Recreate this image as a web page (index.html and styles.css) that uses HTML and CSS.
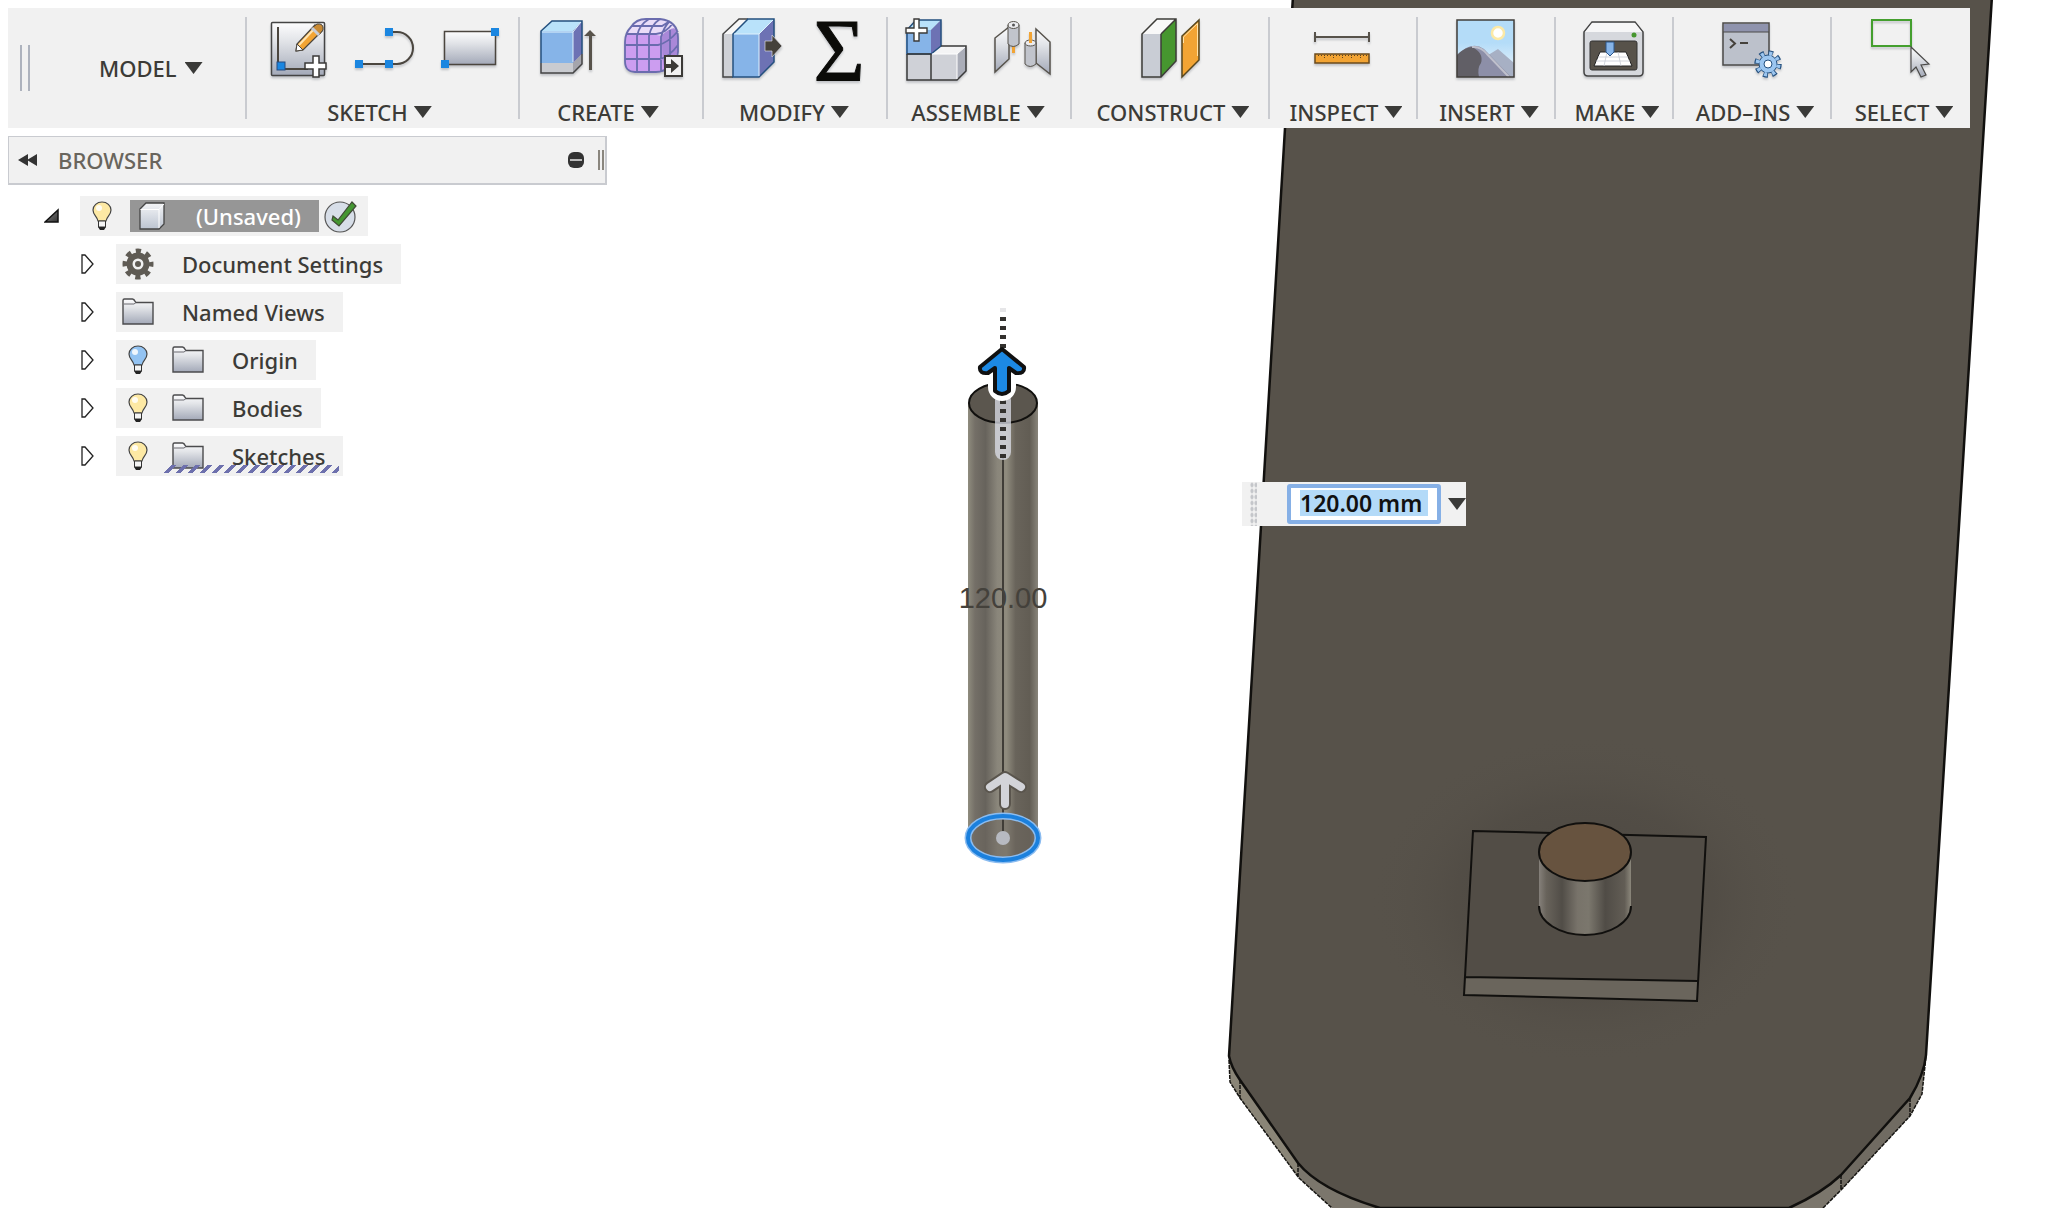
FILE: index.html
```html
<!DOCTYPE html>
<html lang="en">
<head>
<meta charset="utf-8">
<meta name="viewport" content="width=device-width, initial-scale=1">
<title>Model workspace</title>
<link rel="stylesheet" href="styles.css">
</head>
<body>
<svg class="defs" width="0" height="0" aria-hidden="true">
  <defs>
    <linearGradient id="steel" x1="0" y1="0" x2="0" y2="1"><stop offset="0" stop-color="#fdfdfe"/><stop offset=".35" stop-color="#e2e4e8"/><stop offset="1" stop-color="#a3a9b8"/></linearGradient>
    <linearGradient id="glass" x1="0" y1="0" x2="0" y2="1"><stop offset="0" stop-color="#f4f5f7"/><stop offset="1" stop-color="#bcc4d1"/></linearGradient>
    <linearGradient id="cornerShade" x1="0" y1="0" x2="1" y2="1"><stop offset="0" stop-color="#888"/><stop offset="1" stop-color="#333"/></linearGradient>
    <symbol id="bulb" viewBox="0 0 20 30">
      <path d="M6 20C5 15 1 14 1 9a9 8 0 0 1 18 0c0 5-4 6-5 11z" stroke="#444" stroke-width="1.2"/>
      <circle cx="7" cy="7" r="3" fill="#fff" opacity=".85"/>
      <path d="M6.500 20h7v6h-7z" fill="#f4f4f4" stroke="#333"/><path d="M6 26h8l-2 3H8z" fill="#222"/>
    </symbol>
    <symbol id="folder" viewBox="0 0 32 30">
      <path d="M1 3.500q0-1.500 1.500-1.500h8q1.500 0 3 3l.5 .5h17v21.500H1z" fill="url(#steel)" stroke="#4b4b4d" stroke-width="1.400"/>
      <path d="M2 7h10l2-1.500" fill="none" stroke="#6b6b70"/>
    </symbol>
  </defs>
</svg>

<svg class="scene" viewBox="0 0 2066 1208" preserveAspectRatio="xMidYMin slice" role="img" aria-label="Model canvas">
  <defs>
    <linearGradient id="rod"><stop offset="0" stop-color="#8f8c7e"/><stop offset=".1" stop-color="#746f67"/><stop offset=".25" stop-color="#67635c"/><stop offset=".42" stop-color="#8a867b"/><stop offset=".55" stop-color="#8f8b7d"/><stop offset=".68" stop-color="#69645b"/><stop offset=".88" stop-color="#625d54"/><stop offset="1" stop-color="#88847a"/></linearGradient>
    <linearGradient id="peg"><stop offset="0" stop-color="#85807a"/><stop offset=".08" stop-color="#68635b"/><stop offset=".25" stop-color="#514d47"/><stop offset=".42" stop-color="#78736a"/><stop offset=".54" stop-color="#7b776d"/><stop offset=".72" stop-color="#504c46"/><stop offset=".93" stop-color="#625d55"/><stop offset="1" stop-color="#8b877b"/></linearGradient>
    <radialGradient id="shade"><stop offset="0" stop-color="#4b4640"/><stop offset=".6" stop-color="#504b44" stop-opacity=".7"/><stop offset="1" stop-color="#57524a" stop-opacity="0"/></radialGradient>
  </defs>
  <path d="M1229 1056L1230 1082L1240 1098L1299 1178L1332 1208H1823L1841 1190L1910 1116L1922 1094L1926 1056z" fill="#7b766c"/>
  <path d="M1230 1060L1240 1080L1298 1163V1177L1240 1098L1230 1082z" fill="#8a8577"/>
  <path d="M1841 1175L1910 1098V1116L1841 1190z" fill="#706b62"/>
  <path d="M1229 1060L1230 1082L1240 1098L1299 1178L1332 1208M1823 1208L1841 1190L1910 1116L1922 1094L1926 1056M1240 1080V1098M1298 1163V1177M1841 1175V1190M1910 1098V1116" fill="none" stroke="#161512" stroke-width="1.500" stroke-dasharray="4 1"/>
  <path d="M1293-4L1229 1056Q1231 1067 1240 1080L1298 1163Q1320 1190 1380 1208H1789Q1822 1193 1841 1175L1910 1098Q1924 1075 1926 1055L1992-4z" fill="#57524a" stroke="#11100e" stroke-width="2.500"/>
  <ellipse cx="1585" cy="900" rx="215" ry="165" fill="url(#shade)"/>
  <path d="M1473 831L1706 837L1698 981L1465 977z" fill="#524d46"/>
  <path d="M1465 977L1698 981V1001L1464 995z" fill="#6a655c"/>
  <path d="M1473 831L1706 837L1697 1001L1464 995zM1465 977L1698 981" fill="none" stroke="#11100e" stroke-width="2"/>
  <path d="M1539 852V906A46 29 0 0 0 1631 906V852z" fill="url(#peg)"/>
  <path d="M1539 906A46 29 0 0 0 1631 906" fill="none" stroke="#11100e" stroke-width="2"/>
  <ellipse cx="1585" cy="852" rx="46" ry="29" fill="#67533f" stroke="#11100e" stroke-width="2"/>

  <path d="M968 403V838A35 22 0 0 0 1038 838V403z" fill="url(#rod)"/>
  <ellipse cx="1003" cy="403" rx="34" ry="20" fill="#5b564e" stroke="#11100e" stroke-width="2"/>
  <path d="M1003 455V836" stroke="#403d37" stroke-width="2"/>
  <ellipse cx="1003" cy="838" rx="35" ry="22" fill="#6b665d" fill-opacity=".5" stroke="#8bbcf0" stroke-width="7"/>
  <ellipse cx="1003" cy="838" rx="35" ry="22" fill="none" stroke="#1b80dd" stroke-width="4"/>
  <path d="M1003 820V836" stroke="#403d37" stroke-width="2"/>
  <circle cx="1003" cy="838" r="7" fill="#b7bac1"/>
  <path d="M1005 804V778M990 787L1005 777L1021 787" fill="none" stroke="#5a554d" stroke-width="12" stroke-linecap="round" stroke-linejoin="round"/>
  <path d="M1005 804V778M990 787L1005 777L1021 787" fill="none" stroke="#d3d4d9" stroke-width="8" stroke-linecap="round" stroke-linejoin="round"/>
  <path d="M1003 400V452" stroke="#dcdfea" stroke-opacity=".75" stroke-width="16" stroke-linecap="round"/>
  <path d="M1003 308V320" stroke="#e6e6e8" stroke-width="6" stroke-dasharray="4 5"/>
  <path d="M1003 400V458" stroke="#33312e" stroke-width="6" stroke-dasharray="4 5"/>
  <path d="M1002 387V360M987 370L1002 358L1018 370" fill="none" stroke="#fff" stroke-width="28" stroke-linecap="round" stroke-linejoin="round"/>
  <path d="M1003 317V350" stroke="#33312e" stroke-width="6" stroke-dasharray="4 5"/>
  <path d="M1002 349L1024 367Q1025 374 1016 373L1009 368V391Q1002 397 995 391V368L988 373Q979 374 980 367z" fill="#1c89e4" stroke="#101010" stroke-width="4" stroke-linejoin="round"/>
  <text class="dimension" x="1003" y="608" text-anchor="middle">120.00</text>
</svg>

<header class="toolbar">
  <div class="workspace">
    <span class="grip"></span>
    <button class="menu" type="button">MODEL<i class="caret"></i></button>
  </div>

  <section class="group lead">
    <div class="icons">
      <svg class="icon" viewBox="0 0 60 64"><rect x="3.500" y="4.500" width="53" height="53" rx="1" fill="url(#steel)" stroke="#444" stroke-width="1.500"/><path d="M10 9V51H40" fill="none" stroke="#4b463f" stroke-width="2"/><rect x="9" y="44" width="8" height="8" fill="#1b86e0" stroke="#274b80"/><path d="M28 33L29 26L47 7L54 13L35 32z" fill="#f2a434" stroke="#4b463f" stroke-width="1.300"/><path d="M28 33L29 26L35 32z" fill="#fff" stroke="#4b463f"/><path d="M31 27L48 9" stroke="#ffe4b0" stroke-width="2"/><path d="M44 10L51 17L55 12Q56 5 49 6z" fill="#c98a33" stroke="#4b463f"/><path d="M44 10L51 17" stroke="#c7ccd6" stroke-width="3"/><path d="M45 38h6v7h7v6h-7v8h-6v-8h-8v-6h8z" fill="#fff" stroke="#3b3a38" stroke-width="1.500"/></svg>
      <svg class="icon" viewBox="0 0 60 64"><path d="M7 46H45A16 16 0 0 0 45 14H37" fill="none" stroke="#4b463f" stroke-width="2"/><path d="M3 42h8v8H3zM33 42h8v8h-8zM33 10h8v8h-8z" fill="#1b86e0"/></svg>
      <svg class="icon" viewBox="0 0 60 64"><rect x="8.500" y="13.500" width="51" height="33" fill="url(#steel)" stroke="#4b463f" stroke-width="1.500"/><path d="M5 42h8v8H5zM55 10h8v8h-8z" fill="#1b86e0"/></svg>
    </div>
    <button class="menu" type="button">SKETCH<i class="caret"></i></button>
  </section>

  <section class="group lead">
    <div class="icons">
      <svg class="icon" viewBox="0 0 60 64"><path d="M3 13H35V45H3z" fill="#86b4e8"/><path d="M3 13L14 3H44L35 13z" fill="#b9e2fa"/><path d="M35 13L44 3V36L35 45z" fill="#6d72b4"/><path d="M3 45H35V55H3z" fill="#c9cbd0"/><path d="M35 45L44 36V46L35 55z" fill="#a5a5ac"/><path d="M3 45V13L14 3H44V36" fill="none" stroke="#24507f" stroke-width="1.500"/><path d="M3 45V55H35L44 46V36" fill="none" stroke="#444" stroke-width="1.500"/><path d="M4 14H35L43 4M35 14V44" fill="none" stroke="#dff1fc" stroke-width="1"/><path d="M51 52V18H46L52 12L58 18H54V52z" fill="#58534b"/></svg>
      <svg class="icon" viewBox="0 0 60 64"><path d="M3 24Q3 15 9 9Q14 1 24 1H38Q56 3 56 20V34Q55 43 48 48Q42 54 34 54H13Q3 54 3 43z" fill="#cc9df0"/><path d="M5 17Q12 1 24 1H38Q51 2 54 11L40 18Q20 13 5 17z" fill="#eadcf8"/><path d="M40 17Q50 8 54 11Q56 14 56 34L43 49Q40 50 40 17z" fill="#a988d8"/><path d="M3 24Q3 15 9 9Q14 1 24 1H38Q56 3 56 20V34Q55 43 48 48Q42 54 34 54H13Q3 54 3 43zM3 27H36Q46 25 56 13M3 41H38Q47 39 56 27M5 16H34Q44 15 51 5M10 8H40L48 3M15 54V18Q17 7 27 1M27 54V18Q29 7 38 1M39 53V19Q42 9 47 4M48 47V12" fill="none" stroke="#6a6cae" stroke-width="1.800"/><rect x="43" y="38" width="17" height="20" fill="#f1f1f1" stroke="#3c3a37" stroke-width="2"/><path d="M42 46h7v-5l8 7-8 7v-5h-7z" fill="#3c3a37"/></svg>
    </div>
    <button class="menu" type="button">CREATE<i class="caret"></i></button>
  </section>

  <section class="group">
    <div class="icons">
      <svg class="icon" viewBox="0 0 60 64"><path d="M1 16L17 1H26L11 16z" fill="#f7f7f7"/><path d="M1 16H11V59H1z" fill="#cfd1d6"/><path d="M11 16L26 1H52L37 16z" fill="#b9e2fa"/><path d="M11 16H37V59H11z" fill="#86b4e8"/><path d="M37 16L52 1V44L37 59z" fill="#6d72b4"/><path d="M11 59H1V16L17 1H26" fill="none" stroke="#444" stroke-width="1.500"/><path d="M11 16L26 1H52V44L37 59H11z" fill="none" stroke="#24507f" stroke-width="1.500"/><path d="M12 16H37L51 2M37 16V58" fill="none" stroke="#dff1fc"/><path d="M43 23H50V17L60 28L50 39V33H43z" fill="#45413b" stroke="#d9d9dc" stroke-width=".7"/></svg>
      <svg class="icon" viewBox="0 0 60 64"><text class="sigma" x="33" y="62" text-anchor="middle">Σ</text></svg>
    </div>
    <button class="menu" type="button">MODIFY<i class="caret"></i></button>
  </section>

  <section class="group">
    <div class="icons">
      <svg class="icon" viewBox="0 0 60 64"><path d="M0 12L10 2H35L25 12z" fill="#b9e2fa"/><path d="M0 12H25V36H0z" fill="#86b4e8"/><path d="M25 12L35 2V28L25 36z" fill="#6d72b4"/><path d="M25 36L35 28H60L51 36z" fill="#f4f4f5"/><path d="M0 36H51V62H0z" fill="#cfd1d7"/><path d="M51 36L60 28V53L51 62z" fill="#aaadb8"/><path d="M1 36V12L10 2H35V28L25 36z" fill="none" stroke="#24507f" stroke-width="1.500"/><path d="M1 36V62H51L60 53V28H35M25 36V62M25 36H1" fill="none" stroke="#3a3a3a" stroke-width="1.500"/><path d="M26 36H51L59 29M51 36V61" fill="none" stroke="#fff"/><path d="M8 1h5v9h8v5h-8v8H8v-8H0v-5h8z" fill="#fff" stroke="#3b3a38" stroke-width="1.400"/></svg>
      <svg class="icon" viewBox="0 0 60 64"><path d="M5 20L19 9V41L5 54z" fill="url(#steel)" stroke="#57534c" stroke-width="1.500"/><path d="M22 27h3v8h-3zM39 14h3v12h-3z" fill="#f2a434"/><path d="M18 7V26Q23 31 29 26V7z" fill="#c1c4cc" stroke="#57534c"/><ellipse cx="23.500" cy="7" rx="5.500" ry="3.500" fill="#ececef" stroke="#57534c"/><circle cx="23.500" cy="7" r="1.500" fill="#555"/><path d="M46 11L60 24V56L46 45z" fill="url(#steel)" stroke="#57534c" stroke-width="1.500"/><path d="M35 25V46Q40 51 46 46V25z" fill="#c1c4cc" stroke="#57534c"/><ellipse cx="40.500" cy="25" rx="5.500" ry="3" fill="#ececef" stroke="#57534c"/><path d="M39 14h3v11h-3z" fill="#f2a434"/></svg>
    </div>
    <button class="menu" type="button">ASSEMBLE<i class="caret"></i></button>
  </section>

  <section class="group single">
    <div class="icons">
      <svg class="icon" viewBox="0 0 60 64"><path d="M3 16L18 1H37L22 16z" fill="#f8f8f8"/><path d="M3 16H22V59H3z" fill="#c9cdd5"/><path d="M22 16L37 1V43L22 59z" fill="#46962f"/><path d="M3 59V16L18 1H37V43L22 59zM22 16V59M22 16L37 1" fill="none" stroke="#3d3c38" stroke-width="1.500"/><path d="M43 18L60 2V42L43 59z" fill="#f2a434" stroke="#57471f" stroke-width="1.500"/><path d="M44.500 19V25M44.500 19L58.500 5.500V38" fill="none" stroke="#ffe2a8"/></svg>
    </div>
    <button class="menu" type="button">CONSTRUCT<i class="caret"></i></button>
  </section>

  <section class="group single">
    <div class="icons">
      <svg class="icon" viewBox="0 0 60 64"><path d="M3 14V24M57 14V24M3 19H57" stroke="#57524a" stroke-width="2"/><rect x="3" y="36" width="54" height="9" fill="#f2a434" stroke="#6b4b1d" stroke-width="1.500"/><path d="M6 37.500H55" stroke="#5b4523" stroke-dasharray="1 2"/><path d="M12 39.500H55" stroke="#5b4523" stroke-dasharray="1 8"/></svg>
    </div>
    <button class="menu" type="button">INSPECT<i class="caret"></i></button>
  </section>

  <section class="group single">
    <div class="icons">
      <svg class="icon" viewBox="0 0 60 64"><defs><linearGradient id="sky" x1="0" y1="0" x2="0" y2="1"><stop offset=".4" stop-color="#b4dcf8"/><stop offset="1" stop-color="#f2f8fd"/></linearGradient></defs><path d="M2 2H59V59H2z" fill="url(#sky)"/><circle cx="43" cy="15" r="6" fill="#fff" stroke="#fce9a6" stroke-width="2.500"/><path d="M30 39L43 31L59 45V59H45z" fill="#a7b0c4"/><path d="M2 37Q17 22 29 31L56 59H2z" fill="#8d8fa8"/><path d="M2 37Q10 29 17 29Q29 35 26 45Q22 50 24 59H2z" fill="#615f66"/><path d="M17 29Q26 28 32 36L54 59" fill="none" stroke="#bfc0cc" stroke-width="2"/><rect x="2" y="2" width="57" height="57" fill="none" stroke="#403e3a" stroke-width="1.500"/></svg>
    </div>
    <button class="menu" type="button">INSERT<i class="caret"></i></button>
  </section>

  <section class="group single">
    <div class="icons">
      <svg class="icon" viewBox="0 0 60 64"><path d="M1 14L9 4H52L60 14V54Q60 58 56 58H5Q1 58 1 54z" fill="#d6d8dd" stroke="#444" stroke-width="1.500"/><path d="M2 14L9 5H52L59 14z" fill="#f6f6f7"/><circle cx="51" cy="17" r="2.500" fill="#46962f"/><rect x="7" y="23" width="47" height="29" rx="2" fill="#57524a" stroke="#333"/><path d="M17 34H43L49 48H11z" fill="#fff" stroke="#222"/><path d="M15 39H45M13 43H47M24 34L21 48M35 34L38 48" stroke="#c8ccd4" stroke-width=".8"/><path d="M23 24H31V34L27 38L23 34z" fill="#86b4e8" stroke="#2c568a"/></svg>
    </div>
    <button class="menu" type="button">MAKE<i class="caret"></i></button>
  </section>

  <section class="group single">
    <div class="icons">
      <svg class="icon" viewBox="0 0 60 64"><rect x="2" y="5" width="46" height="42" fill="#bcc1cb" stroke="#4b4a48" stroke-width="1.500"/><path d="M3 6H47V14H3z" fill="#8f93ad"/><path d="M2 14H48" stroke="#4b4a48"/><path d="M9 21L14 25.500L9 30M19 25H27" fill="none" stroke="#45413b" stroke-width="2"/><circle cx="47" cy="46" r="11" fill="none" stroke="#24507f" stroke-width="5.500" stroke-dasharray="4.600 4.040"/><circle cx="47" cy="46" r="9" fill="#9cc6f0" stroke="#24507f"/><circle cx="47" cy="46" r="10.500" fill="none" stroke="#9cc6f0" stroke-width="4" stroke-dasharray="3 5.250" stroke-dashoffset="-.8"/><circle cx="47" cy="46" r="4" fill="#fff" stroke="#24507f"/></svg>
    </div>
    <button class="menu" type="button">ADD–INS<i class="caret"></i></button>
  </section>

  <section class="group single">
    <div class="icons">
      <svg class="icon" viewBox="0 0 60 64"><rect x="2" y="2" width="39" height="26" fill="none" stroke="#449f2e" stroke-width="2"/><path d="M41 29L59 46L51 47L56 57L51 59L46 49L41 54z" fill="url(#steel)" stroke="#4b4a48" stroke-width="1.200"/></svg>
    </div>
    <button class="menu" type="button">SELECT<i class="caret"></i></button>
  </section>
</header>

<aside class="browser">
  <div class="panel-head">
    <button class="collapse" type="button" aria-label="Collapse"><svg width="20" height="12" viewBox="0 0 20 12"><path d="M0 6L10 0V12zM9 6L19 0V12z" fill="#333"/></svg></button>
    <h2>BROWSER</h2>
    <button class="pin" type="button" aria-label="Minimize"><svg width="16" height="16" viewBox="0 0 16 16"><rect width="16" height="16" rx="6" fill="#333"/><path d="M2 8H14" stroke="#bbb" stroke-width="2"/></svg></button>
    <span class="resizer"></span>
  </div>

  <ul class="tree">
    <li class="root">
      <svg class="toggle" viewBox="0 0 16 20"><path d="M1 16L14 4V16z" fill="url(#cornerShade)" stroke="#111" stroke-width="1.500"/></svg>
      <div class="node">
        <svg class="bulb on"><use href="#bulb"/></svg>
        <span class="doc">
          <svg class="cube" viewBox="0 0 28 28"><path d="M2 7L8 1H26V22L21 27H2z" fill="url(#glass)" stroke="#444" stroke-width="1.300"/><path d="M2.500 7.500H21M21 26V7.500L26 2" fill="none" stroke="#fff"/></svg>
          (Unsaved)
        </span>
        <svg class="check" viewBox="0 0 34 34"><circle cx="16" cy="18" r="15" fill="#d7dee8" stroke="#555" stroke-width="1.200"/><path d="M9 17L14 21L28 3L32 7L15 27L8 21z" fill="#449732" stroke="#3f4a35" stroke-width="1.200"/></svg>
      </div>
    </li>
    <li>
      <svg class="toggle" viewBox="0 0 16 20"><path d="M2 1H5L13 10L5 19H2z" fill="#fff" stroke="#222" stroke-width="1.300"/></svg>
      <div class="node">
        <svg class="glyph" viewBox="0 0 32 32"><circle cx="16" cy="16" r="13" fill="none" stroke="#5f5b54" stroke-width="5" stroke-dasharray="5.200 5.010" stroke-dashoffset="2.600"/><circle cx="16" cy="16" r="8.500" fill="none" stroke="#5f5b54" stroke-width="6"/><circle cx="16" cy="16" r="3" fill="#5f5b54"/></svg>
        <span class="name">Document Settings</span>
      </div>
    </li>
    <li>
      <svg class="toggle" viewBox="0 0 16 20"><path d="M2 1H5L13 10L5 19H2z" fill="#fff" stroke="#222" stroke-width="1.300"/></svg>
      <div class="node"><svg class="glyph"><use href="#folder"/></svg><span class="name">Named Views</span></div>
    </li>
    <li>
      <svg class="toggle" viewBox="0 0 16 20"><path d="M2 1H5L13 10L5 19H2z" fill="#fff" stroke="#222" stroke-width="1.300"/></svg>
      <div class="node"><svg class="bulb off"><use href="#bulb"/></svg><svg class="glyph"><use href="#folder"/></svg><span class="name">Origin</span></div>
    </li>
    <li>
      <svg class="toggle" viewBox="0 0 16 20"><path d="M2 1H5L13 10L5 19H2z" fill="#fff" stroke="#222" stroke-width="1.300"/></svg>
      <div class="node"><svg class="bulb on"><use href="#bulb"/></svg><svg class="glyph"><use href="#folder"/></svg><span class="name">Bodies</span></div>
    </li>
    <li>
      <svg class="toggle" viewBox="0 0 16 20"><path d="M2 1H5L13 10L5 19H2z" fill="#fff" stroke="#222" stroke-width="1.300"/></svg>
      <div class="node pending"><svg class="bulb on"><use href="#bulb"/></svg><svg class="glyph"><use href="#folder"/></svg><span class="name">Sketches</span></div>
    </li>
  </ul>
</aside>

<form class="value-box">
  <span class="dots"></span>
  <input type="text" value="120.00 mm" aria-label="Distance">
  <button type="button" aria-label="Distance options"><i class="caret"></i></button>
</form>
</body>
</html>
```
FILE: styles.css
```css
* {
  box-sizing: border-box;
}

body {
  position: relative;
  min-height: 100vh;
  margin: 0;
  padding: 8px;
  overflow-x: hidden;
  background: #fff;
  color: #3c3b37;
  font: 500 22px/26px "Noto Sans", sans-serif;
}

button {
  padding: 0;
  border: 0;
  background: none;
  color: inherit;
  font: inherit;
}

.defs {
  position: absolute;
}

.scene {
  position: absolute;
  inset: 0;
  width: 100%;
  height: 100%;
}

.dimension {
  fill: #44413b;
  font: 400 29px "Liberation Sans", sans-serif;
}

.toolbar {
  position: relative;
  display: grid;
  grid-template-columns: 237fr 273fr 184fr 184fr 184fr 198fr 148fr 138fr 118fr 158fr 140fr;
  height: 120px;
  margin-right: 88px;
  background: #f1f1f1;
}

.workspace {
  display: flex;
  align-items: center;
  gap: 69px;
  margin: 5px 0;
  padding-left: 12px;
}

.grip {
  width: 10px;
  height: 46px;
  border: solid #adb2bd;
  border-width: 0 2px;
}

.group {
  display: flex;
  flex-direction: column;
  align-items: center;
  justify-content: space-between;
  padding: 10px 0 3px;
  background: linear-gradient(#c9cbd0, #c9cbd0) 0 9px / 2px 102px no-repeat;
}

.icons {
  display: flex;
  gap: 24px;
}

.icon {
  width: 60px;
  height: 64px;
  overflow: visible;
  filter: drop-shadow(0 2px 1px rgb(80 85 100 / 30%));
}

.sigma {
  fill: #0b0b08;
  stroke: #0b0b08;
  stroke-width: 1px;
  font: 400 88px "Liberation Serif", serif;
}

.menu {
  display: flex;
  align-items: center;
  gap: 6px;
  white-space: nowrap;
}

.workspace .menu {
  gap: 8px;
}

.lead .menu {
  padding-right: 4px;
}

.single .menu {
  padding-left: 8px;
}

.caret {
  display: block;
  width: 18px;
  height: 12px;
  background: #3a3a38;
  clip-path: polygon(0 0, 100% 0, 50% 100%);
}

.browser {
  position: relative;
  width: 599px;
  margin-top: 8px;
}

.panel-head {
  display: flex;
  align-items: center;
  height: 49px;
  padding: 0 1px 0 9px;
  border: 1px solid #c9cbd0;
  border-width: 1px 2px 2px 1px;
  background: #f1f1f1;
}

.collapse,
.pin {
  display: flex;
}

.panel-head h2 {
  flex: 1;
  margin: 0 0 0 20px;
  color: #69655d;
  font: inherit;
}

.resizer {
  width: 6px;
  height: 20px;
  margin-left: 14px;
  border: solid #8a867e;
  border-width: 0 2px;
}

.tree {
  display: flex;
  flex-direction: column;
  gap: 8px;
  margin: 11px 0 0;
  padding: 0 0 0 72px;
  list-style: none;
}

.tree li {
  display: flex;
  align-items: center;
  gap: 20px;
}

.tree .root {
  margin-left: -36px;
}

.toggle {
  width: 16px;
  height: 20px;
}

.node {
  display: flex;
  align-items: center;
  height: 40px;
  padding: 0 18px 0 6px;
  background: #f1f1f1;
}

.root .node {
  padding: 0 10px;
}

.bulb {
  width: 20px;
  height: 30px;
  margin: 0 24px 0 6px;
}

.root .bulb {
  margin: 0 18px 0 2px;
}

.on {
  fill: #fde9a4;
}

.off {
  fill: #93c3f2;
}

.glyph {
  width: 32px;
  height: 32px;
}

.name {
  margin-left: 28px;
  white-space: nowrap;
}

.doc {
  display: flex;
  align-items: center;
  gap: 30px;
  height: 32px;
  padding: 0 18px 0 8px;
  background: #969696;
  color: #fff;
}

.cube {
  width: 28px;
  height: 28px;
}

.check {
  width: 34px;
  height: 34px;
  margin-left: 5px;
}

.pending {
  position: relative;
}

.pending::after {
  content: "";
  position: absolute;
  right: 4px;
  bottom: 3px;
  left: 48px;
  height: 8px;
  background: linear-gradient(135deg, transparent 39%, #6d70ad 40% 60%, transparent 61%) 0 0 / 12px 8px;
}

.value-box {
  position: absolute;
  top: 482px;
  left: 1242px;
  display: flex;
  align-items: center;
  width: 224px;
  height: 44px;
  padding-left: 8px;
  background: #f1f1f1;
}

.dots {
  width: 7px;
  height: 44px;
  background: radial-gradient(#c4c6ca 1px, transparent 2px) 0 0 / 4px 6px;
}

.value-box input {
  width: 154px;
  height: 40px;
  margin: 0 7px 0 30px;
  padding: 2px 9px 4px;
  border: 4px solid #86b0e6;
  outline: 0;
  border-radius: 3px;
  background: linear-gradient(#b3daf8, #b3daf8) content-box no-repeat, #fff;
  color: #111;
  font: 600 23px/26px "Noto Sans", sans-serif;
}
```
